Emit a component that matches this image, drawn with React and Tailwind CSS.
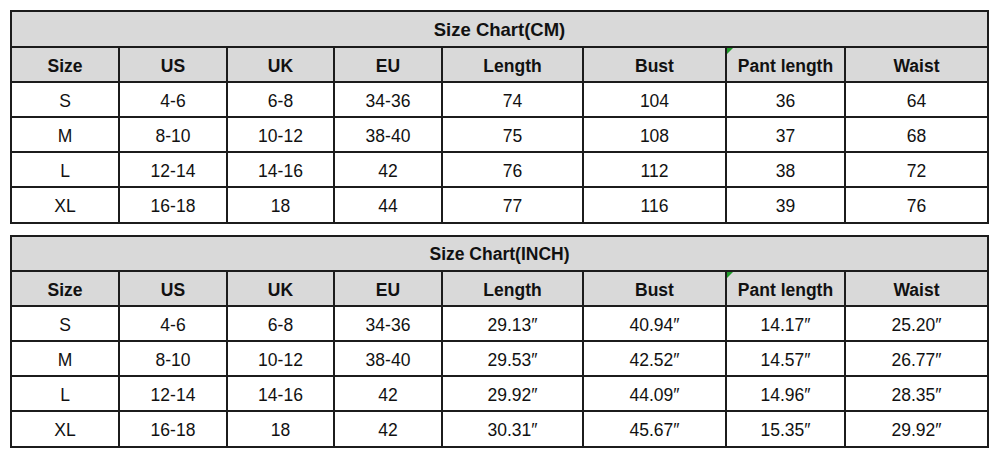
import React from "react";

const cols = "grid-cols-[108px_108px_107px_108px_141px_143px_119px_141px]";
const headers = ["Size", "US", "UK", "EU", "Length", "Bust", "Pant length", "Waist"];

const cmRows = [
  ["S", "4-6", "6-8", "34-36", "74", "104", "36", "64"],
  ["M", "8-10", "10-12", "38-40", "75", "108", "37", "68"],
  ["L", "12-14", "14-16", "42", "76", "112", "38", "72"],
  ["XL", "16-18", "18", "44", "77", "116", "39", "76"],
];

const inchRows = [
  ["S", "4-6", "6-8", "34-36", "29.13″", "40.94″", "14.17″", "25.20″"],
  ["M", "8-10", "10-12", "38-40", "29.53″", "42.52″", "14.57″", "26.77″"],
  ["L", "12-14", "14-16", "42", "29.92″", "44.09″", "14.96″", "28.35″"],
  ["XL", "16-18", "18", "42", "30.31″", "45.67″", "15.35″", "29.92″"],
];

function Table({ title, rows, titleH, titleSize }) {
  return (
    <div className="w-[979px] border-2 border-[#1c1c1c]">
      <div
        className={`${titleH} ${titleSize} bg-[#d9d9d9] border-b-2 border-[#1c1c1c] flex items-center justify-center pt-[2px] font-bold text-[#111]`}
      >
        {title}
      </div>
      <div className={`grid ${cols} bg-[#d9d9d9] border-b-2 border-[#1c1c1c]`}>
        {headers.map((h, i) => (
          <div
            key={h}
            className={`relative h-[33px] flex items-center justify-center pt-[3px] text-[17.5px] font-bold text-[#111] ${
              i < 7 ? "border-r-2 border-[#1c1c1c]" : ""
            }`}
          >
            {i === 6 && (
              <span className="absolute left-0 top-0 w-[6px] h-[6px] bg-[#1f9a2a] [clip-path:polygon(0_0,100%_0,0_100%)]" />
            )}
            {h}
          </div>
        ))}
      </div>
      {rows.map((r, ri) => (
        <div
          key={ri}
          className={`grid ${cols} bg-white ${ri < 3 ? "border-b-2 border-[#1c1c1c]" : ""}`}
        >
          {r.map((c, i) => (
            <div
              key={i}
              className={`${ri < 3 ? "h-[33px]" : "h-[34px]"} flex items-center justify-center pt-[3px] text-[17.5px] text-[#111] ${
                i < 7 ? "border-r-2 border-[#1c1c1c]" : ""
              }`}
            >
              {c}
            </div>
          ))}
        </div>
      ))}
    </div>
  );
}

export default function App() {
  return (
    <div
      className="w-[1000px] h-[462px] bg-white pl-[10px] pt-[10px] flex flex-col gap-[11px]"
      style={{ fontFamily: '"Liberation Sans", Arial, sans-serif' }}
    >
      <Table title="Size Chart(CM)" rows={cmRows} titleH="h-[36px]" titleSize="text-[18.5px]" />
      <Table title="Size Chart(INCH)" rows={inchRows} titleH="h-[35px]" titleSize="text-[17.5px]" />
    </div>
  );
}
